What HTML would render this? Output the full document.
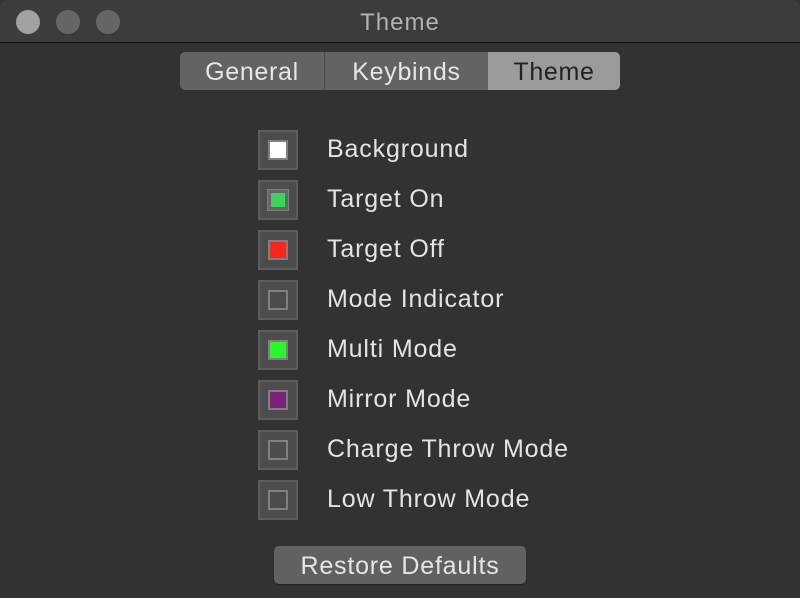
<!DOCTYPE html>
<html><head><style>
*{margin:0;padding:0;box-sizing:border-box}
body{width:800px;height:598px;background:#323232;font-family:"Liberation Sans",sans-serif;overflow:hidden;position:relative}
.tb{position:absolute;left:0;top:0;width:800px;height:43px;background:#3c3c3c;border-bottom:1px solid #111;border-radius:8px 8px 0 0}
.dot{position:absolute;top:10px;width:24px;height:24px;border-radius:50%;background:#656565}
.title{position:absolute;top:9px;width:800px;text-align:center;color:#b2b2b2;font-size:24px;letter-spacing:1px}
.seg{position:absolute;left:180px;top:52px;width:440px;height:38px;border-radius:5px;overflow:hidden;display:flex;background:#636363}
.seg div{height:38px;line-height:40px;text-align:center;color:#e6e6e6;font-size:25px;letter-spacing:0.7px}
.row{position:absolute;left:258px;width:340px;height:40px}
.well{position:absolute;left:0;top:0;width:40px;height:40px;background:#4c4c4c;border:2px solid #5c5c5c}
.sw{position:absolute;left:8px;top:8px;width:20px;height:20px;border:2px solid #808080;background:#4c4c4c}
.lbl{position:absolute;left:69px;top:5px;color:#e4e4e4;font-size:25px;letter-spacing:0.85px;white-space:nowrap}
.btn{position:absolute;left:274px;top:546px;width:252px;height:38px;background:#616161;border-radius:5px;color:#e6e6e6;font-size:25px;letter-spacing:0.8px;text-align:center;line-height:41px;box-shadow:0 1px 1px #222}
</style></head><body>
<div class="tb"></div>
<div class="dot" style="left:16px;background:#a2a2a2"></div>
<div class="dot" style="left:56px"></div>
<div class="dot" style="left:96px"></div>
<div class="title">Theme</div>
<div class="seg">
<div style="width:145px;border-right:1px solid #4a4a4a">General</div>
<div style="width:163px">Keybinds</div>
<div style="width:132px;background:#9b9b9b;color:#222">Theme</div>
</div>
<div class="row" style="top:130px"><div class="well"><div class="sw" style="background:#fff"></div></div><div class="lbl">Background</div></div>
<div class="row" style="top:180px"><div class="well"><div class="sw" style="background:#3dd45a;border:3px solid #666;outline:1px solid #808080"></div></div><div class="lbl">Target On</div></div>
<div class="row" style="top:230px"><div class="well"><div class="sw" style="background:#fa2720"></div></div><div class="lbl">Target Off</div></div>
<div class="row" style="top:280px"><div class="well"><div class="sw"></div></div><div class="lbl">Mode Indicator</div></div>
<div class="row" style="top:330px"><div class="well"><div class="sw" style="background:#2cf62c"></div></div><div class="lbl">Multi Mode</div></div>
<div class="row" style="top:380px"><div class="well"><div class="sw" style="background:#7c1f7f"></div></div><div class="lbl">Mirror Mode</div></div>
<div class="row" style="top:430px"><div class="well"><div class="sw"></div></div><div class="lbl">Charge Throw Mode</div></div>
<div class="row" style="top:480px"><div class="well"><div class="sw"></div></div><div class="lbl">Low Throw Mode</div></div>
<div class="btn">Restore Defaults</div>
</body></html>
